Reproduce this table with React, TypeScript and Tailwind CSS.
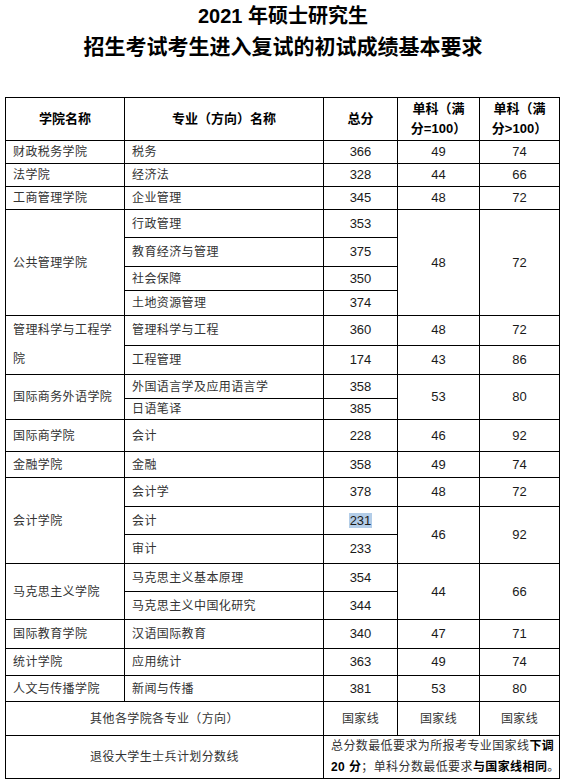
import React from 'react';

const FONT = '"Liberation Sans", "Noto Sans CJK SC", sans-serif';

function Td({
  children,
  rowSpan,
  colSpan,
  center,
  className = '',
}: {
  children?: React.ReactNode;
  rowSpan?: number;
  colSpan?: number;
  center?: boolean;
  className?: string;
}) {
  return (
    <td
      rowSpan={rowSpan}
      colSpan={colSpan}
      className={`border border-black px-[7px] py-0 align-middle text-[12px] leading-[16px] tracking-[0.4px] text-[#333] ${
        center ? 'text-center' : 'text-left'
      } ${className}`}
    >
      {children}
    </td>
  );
}

function Num({ children, rowSpan }: { children: React.ReactNode; rowSpan?: number }) {
  return (
    <td
      rowSpan={rowSpan}
      className="border border-black p-0 text-center align-middle text-[13px] leading-[16px] text-[#1a1a1a]"
    >
      {children}
    </td>
  );
}

export default function App() {
  return (
    <div className="w-[566px] min-h-[782px] bg-white" style={{ fontFamily: FONT }}>
      <div className="pt-[4px] text-center font-bold text-black">
        <div className="text-[20px] leading-[24px]">2021 年硕士研究生</div>
        <div className="mt-[4px] text-[21px] leading-[30px]">招生考试考生进入复试的初试成绩基本要求</div>
      </div>

      <table className="ml-[5px] mt-[35px] w-[554px] table-fixed border-collapse">
        <colgroup>
          <col className="w-[119px]" />
          <col className="w-[199px]" />
          <col className="w-[74px]" />
          <col className="w-[82px]" />
          <col className="w-[80px]" />
        </colgroup>
        <tbody>
          <tr className="h-[43px]">
            <td className="border border-black text-center align-middle text-[13px] font-bold text-black">学院名称</td>
            <td className="border border-black text-center align-middle text-[13px] font-bold text-black">专业（方向）名称</td>
            <td className="border border-black text-center align-middle text-[13px] font-bold text-black">总分</td>
            <td className="border border-black text-center align-middle text-[13px] font-bold leading-[20px] text-black">
              单科（满
              <br />
              分=100）
            </td>
            <td className="border border-black text-center align-middle text-[13px] font-bold leading-[20px] text-black">
              单科（满
              <br />
              分&gt;100）
            </td>
          </tr>

          <tr className="h-[23px]">
            <Td>财政税务学院</Td>
            <Td>税务</Td>
            <Num>366</Num>
            <Num>49</Num>
            <Num>74</Num>
          </tr>
          <tr className="h-[23px]">
            <Td>法学院</Td>
            <Td>经济法</Td>
            <Num>328</Num>
            <Num>44</Num>
            <Num>66</Num>
          </tr>
          <tr className="h-[23px]">
            <Td>工商管理学院</Td>
            <Td>企业管理</Td>
            <Num>345</Num>
            <Num>48</Num>
            <Num>72</Num>
          </tr>

          <tr className="h-[28px]">
            <Td rowSpan={4}>公共管理学院</Td>
            <Td>行政管理</Td>
            <Num>353</Num>
            <Num rowSpan={4}>48</Num>
            <Num rowSpan={4}>72</Num>
          </tr>
          <tr className="h-[29px]">
            <Td>教育经济与管理</Td>
            <Num>375</Num>
          </tr>
          <tr className="h-[24px]">
            <Td>社会保障</Td>
            <Num>350</Num>
          </tr>
          <tr className="h-[25px]">
            <Td>土地资源管理</Td>
            <Num>374</Num>
          </tr>

          <tr className="h-[29px]">
            <Td rowSpan={2} className="leading-[29px]">
              管理科学与工程学院
            </Td>
            <Td>管理科学与工程</Td>
            <Num>360</Num>
            <Num>48</Num>
            <Num>72</Num>
          </tr>
          <tr className="h-[29px]">
            <Td>工程管理</Td>
            <Num>174</Num>
            <Num>43</Num>
            <Num>86</Num>
          </tr>

          <tr className="h-[24px]">
            <Td rowSpan={2}>国际商务外语学院</Td>
            <Td>外国语言学及应用语言学</Td>
            <Num>358</Num>
            <Num rowSpan={2}>53</Num>
            <Num rowSpan={2}>80</Num>
          </tr>
          <tr className="h-[21px]">
            <Td>日语笔译</Td>
            <Num>385</Num>
          </tr>

          <tr className="h-[32px]">
            <Td>国际商学院</Td>
            <Td>会计</Td>
            <Num>228</Num>
            <Num>46</Num>
            <Num>92</Num>
          </tr>
          <tr className="h-[26px]">
            <Td>金融学院</Td>
            <Td>金融</Td>
            <Num>358</Num>
            <Num>49</Num>
            <Num>74</Num>
          </tr>

          <tr className="h-[29px]">
            <Td rowSpan={3}>会计学院</Td>
            <Td>会计学</Td>
            <Num>378</Num>
            <Num>48</Num>
            <Num>72</Num>
          </tr>
          <tr className="h-[28px]">
            <Td>会计</Td>
            <Num>
              <span className="bg-[#b3cde8] px-[1px]">231</span>
            </Num>
            <Num rowSpan={2}>46</Num>
            <Num rowSpan={2}>92</Num>
          </tr>
          <tr className="h-[29px]">
            <Td>审计</Td>
            <Num>233</Num>
          </tr>

          <tr className="h-[28px]">
            <Td rowSpan={2}>马克思主义学院</Td>
            <Td>马克思主义基本原理</Td>
            <Num>354</Num>
            <Num rowSpan={2}>44</Num>
            <Num rowSpan={2}>66</Num>
          </tr>
          <tr className="h-[28px]">
            <Td>马克思主义中国化研究</Td>
            <Num>344</Num>
          </tr>

          <tr className="h-[29px]">
            <Td>国际教育学院</Td>
            <Td>汉语国际教育</Td>
            <Num>340</Num>
            <Num>47</Num>
            <Num>71</Num>
          </tr>
          <tr className="h-[27px]">
            <Td>统计学院</Td>
            <Td>应用统计</Td>
            <Num>363</Num>
            <Num>49</Num>
            <Num>74</Num>
          </tr>
          <tr className="h-[26px]">
            <Td>人文与传播学院</Td>
            <Td>新闻与传播</Td>
            <Num>381</Num>
            <Num>53</Num>
            <Num>80</Num>
          </tr>

          <tr className="h-[34px]">
            <Td colSpan={2} center>
              其他各学院各专业（方向）
            </Td>
            <Td center>国家线</Td>
            <Td center>国家线</Td>
            <Td center>国家线</Td>
          </tr>
          <tr className="h-[42px]">
            <Td colSpan={2} center>
              退役大学生士兵计划分数线
            </Td>
            <Td colSpan={3} className="whitespace-nowrap px-[6px] leading-[21px] tracking-[0.1px]">
              总分数最低要求为所报考专业国家线<b className="text-black">下调</b>
              <br />
              <b className="text-black">20 分</b>；单科分数最低要求<b className="text-black">与国家线相同</b>。
            </Td>
          </tr>
        </tbody>
      </table>
    </div>
  );
}
